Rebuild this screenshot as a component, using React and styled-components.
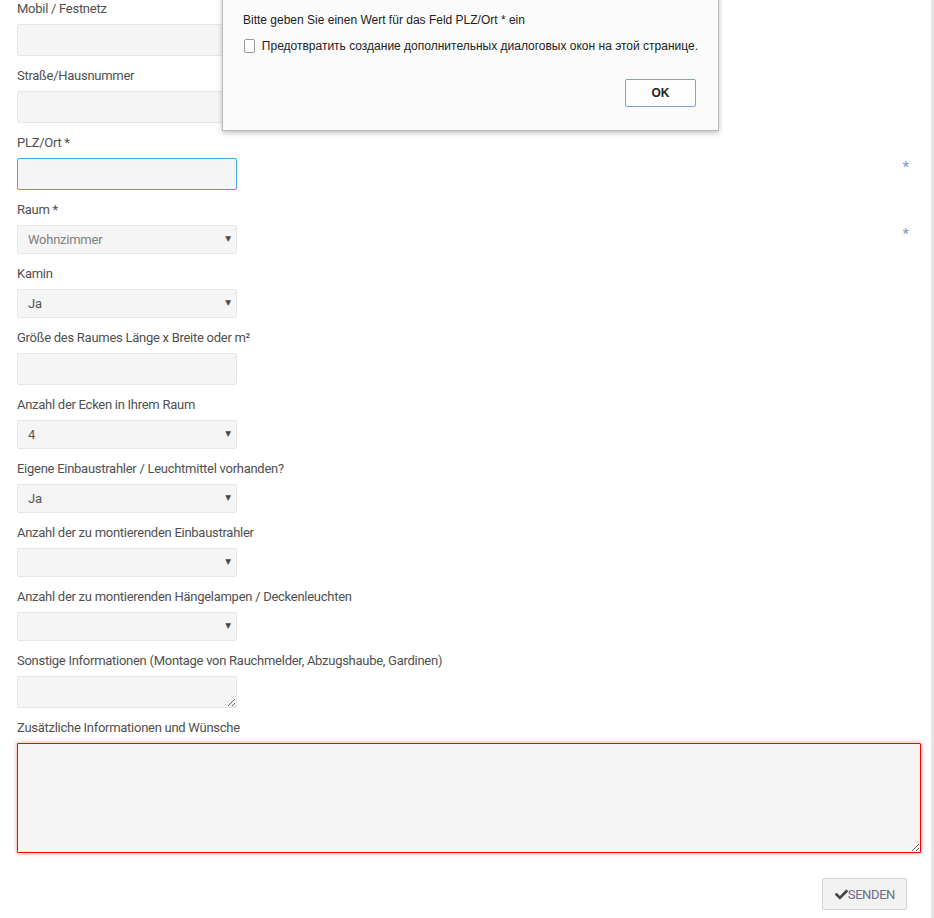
import styled, { createGlobalStyle } from 'styled-components';
import { FaCheck } from 'react-icons/fa';

const GlobalStyle = createGlobalStyle`
  html, body {
    margin: 0;
    padding: 0;
    background: #fff;
  }
  body {
    font-family: Roboto, "Noto Sans", sans-serif;
  }
`;

const fields = [
  { label: 'Mobil / Festnetz', type: 'input' },
  { label: 'Straße/Hausnummer', type: 'input' },
  { label: 'PLZ/Ort *', type: 'input', focus: true, required: true },
  { label: 'Raum *', type: 'select', value: 'Wohnzimmer', muted: true, required: true },
  { label: 'Kamin', type: 'select', value: 'Ja' },
  { label: 'Größe des Raumes Länge x Breite oder m²', type: 'input' },
  { label: 'Anzahl der Ecken in Ihrem Raum', type: 'select', value: '4' },
  { label: 'Eigene Einbaustrahler / Leuchtmittel vorhanden?', type: 'select', value: 'Ja' },
  { label: 'Anzahl der zu montierenden Einbaustrahler', type: 'select', value: '' },
  { label: 'Anzahl der zu montierenden Hängelampen / Deckenleuchten', type: 'select', value: '' },
  { label: 'Sonstige Informationen (Montage von Rauchmelder, Abzugshaube, Gardinen)', type: 'textarea' },
];

export default function App() {
  return (
    <Page>
      <GlobalStyle />
      <Main>
        <Form>
          {fields.map((f) => (
            <Group key={f.label}>
              <Label>{f.label}</Label>
              <ControlRow>
                {f.type === 'input' && <Input $focus={f.focus} />}
                {f.type === 'textarea' && <SmallArea />}
                {f.type === 'select' && (
                  <SelectWrap>
                    <Select $muted={f.muted} defaultValue={f.value}>
                      <option value={f.value}>{f.value}</option>
                    </Select>
                    <Arrow>▼</Arrow>
                  </SelectWrap>
                )}
                {f.required && <Required>*</Required>}
              </ControlRow>
            </Group>
          ))}
          <Group>
            <Label>Zusätzliche Informationen und Wünsche</Label>
            <BigArea />
          </Group>
          <Actions>
            <SubmitButton type="button">
              <FaCheck />
              SENDEN
            </SubmitButton>
          </Actions>
        </Form>
      </Main>
      <ScrollEdge />

      <Dialog>
        <DialogText>Bitte geben Sie einen Wert für das Feld PLZ/Ort * ein</DialogText>
        <CheckLine>
          <Box />
          Предотвратить создание дополнительных диалоговых окон на этой странице.
        </CheckLine>
        <DialogFooter>
          <OkButton type="button">OK</OkButton>
        </DialogFooter>
      </Dialog>
    </Page>
  );
}

const Page = styled.div`
  position: relative;
  display: flex;
  width: 934px;
  min-height: 918px;
  overflow: hidden;
`;

const Main = styled.div`
  flex: 1;
`;

const ScrollEdge = styled.div`
  width: 3px;
  background: #e6e6e6;
`;

const Form = styled.form`
  display: flex;
  flex-direction: column;
  padding: 0 10px 0 17px;
`;

const Group = styled.div`
  display: flex;
  flex-direction: column;
  margin-bottom: 11px;
`;

const Label = styled.label`
  font-size: 13px;
  line-height: 18px;
  color: #505050;
  letter-spacing: -0.27px;
  margin-bottom: 6px;
`;

const ControlRow = styled.div`
  display: flex;
  justify-content: space-between;
  align-items: flex-start;
`;

const Input = styled.input`
  box-sizing: border-box;
  width: 220px;
  height: 32px;
  background: #f5f5f5;
  border: 1px solid ${(p) => (p.$focus ? '#3ea7dd' : '#e6e6e6')};
  border-radius: 2px;
  outline: none;
  padding: 0 10px;
`;

const SmallArea = styled.textarea`
  box-sizing: border-box;
  width: 220px;
  height: 32px;
  background: #f5f5f5;
  border: 1px solid #e6e6e6;
  border-radius: 2px;
  outline: none;
  padding: 4px 10px;
`;

const BigArea = styled.textarea`
  box-sizing: border-box;
  width: 904px;
  height: 110px;
  background: #f5f5f5;
  border: 1px solid #f00;
  border-radius: 1px;
  box-shadow: 0 0 4px rgba(255, 0, 0, 0.45);
  outline: none;
  padding: 6px 10px;
`;

const SelectWrap = styled.div`
  position: relative;
  width: 220px;
  height: 29px;
`;

const Select = styled.select`
  appearance: none;
  box-sizing: border-box;
  width: 100%;
  height: 100%;
  background: #f5f5f5;
  border: 1px solid #e6e6e6;
  border-radius: 2px;
  padding: 0 10px;
  font-family: Roboto, sans-serif;
  font-size: 13px;
  letter-spacing: -0.25px;
  color: ${(p) => (p.$muted ? '#808080' : '#555')};
  outline: none;
`;

const Arrow = styled.span`
  position: absolute;
  right: 6px;
  top: 9px;
  font-family: "DejaVu Sans", sans-serif;
  font-size: 7.5px;
  color: #4a4a4a;
  pointer-events: none;
`;

const Required = styled.span`
  color: #7f98c4;
  font-size: 15px;
  line-height: 15px;
  margin: 2px 12px 0 0;
`;

const Actions = styled.div`
  display: flex;
  justify-content: flex-end;
  padding: 14px 14px 0 0;
`;

const SubmitButton = styled.button`
  display: flex;
  align-items: center;
  gap: 0;
  height: 32px;
  padding: 0 11px 0 12px;
  background: #f2f2f2;
  border: 1px solid #d2d2d2;
  border-radius: 2px;
  font-family: Roboto, sans-serif;
  font-size: 13px;
  color: #6d6d8a;
  letter-spacing: -0.4px;
  svg {
    color: #444;
    font-size: 13px;
  }
`;

const Dialog = styled.div`
  position: absolute;
  left: 222px;
  top: -10px;
  box-sizing: border-box;
  width: 497px;
  height: 141px;
  padding: 21px 20px 0 20px;
  background: #fbfbfb;
  border: 1px solid #b9b9b9;
  box-shadow: 0 2px 5px rgba(0, 0, 0, 0.25);
  font-family: "Liberation Sans", Arial, sans-serif;
  font-size: 12px;
  color: #222;
`;

const DialogText = styled.div`
  line-height: 16px;
  white-space: nowrap;
`;

const CheckLine = styled.div`
  display: flex;
  align-items: center;
  gap: 7px;
  margin-top: 10px;
  line-height: 16px;
  white-space: nowrap;
`;

const Box = styled.span`
  box-sizing: border-box;
  width: 14px;
  height: 14px;
  margin-left: 1px;
  border: 1px solid #9a9a9a;
  border-radius: 2px;
  background: #fff;
`;

const DialogFooter = styled.div`
  display: flex;
  justify-content: flex-end;
  margin-top: 25px;
  padding-right: 2px;
`;

const OkButton = styled.button`
  width: 71px;
  height: 28px;
  background: #fdfdfd;
  border: 1px solid #7f9fd0;
  border-radius: 2px;
  font-family: "Liberation Sans", Arial, sans-serif;
  font-weight: 700;
  font-size: 12px;
  color: #222;
`;
